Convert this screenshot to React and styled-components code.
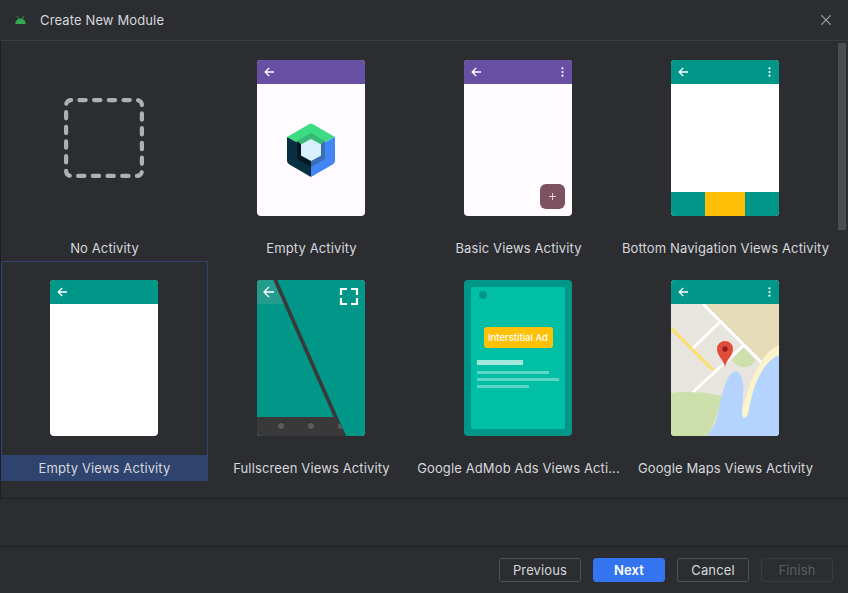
import React from "react";
import styled, { createGlobalStyle } from "styled-components";

const GlobalStyle = createGlobalStyle`
  html, body {
    margin: 0;
    padding: 0;
    background: #2b2d30;
  }
  * {
    box-sizing: border-box;
  }
`;

const Dialog = styled.div`
  width: 848px;
  height: 593px;
  display: flex;
  flex-direction: column;
  background: #2b2d30;
  color: #d6d8dd;
  font-family: Inter, "Liberation Sans", sans-serif;
  font-size: 13px;
  letter-spacing: 0.13px;
  overflow: hidden;
`;

const TitleBar = styled.header`
  height: 41px;
  flex: none;
  display: flex;
  align-items: center;
  padding: 0 17px 1px 15px;
  border-bottom: 1px solid #393b40;
`;

const Title = styled.span`
  margin-left: 14px;
  flex: 1;
`;

const Gallery = styled.div`
  position: relative;
  height: 458px;
  flex: none;
  border-left: 1px solid #1e1f22;
  border-bottom: 1px solid #1e1f22;
`;

const Grid = styled.div`
  display: grid;
  grid-template-columns: repeat(4, 207px);
  grid-auto-rows: 220px;
`;

const Cell = styled.div`
  display: flex;
  flex-direction: column;
  align-items: center;
  padding-top: 19px;
  box-shadow: ${(props) => (props.selected ? "inset 0 0 0 1px #2e436e" : "none")};
`;

const Label = styled.div`
  width: 100%;
  height: 26px;
  margin-top: 19px;
  display: flex;
  align-items: center;
  justify-content: center;
  white-space: nowrap;
  background: ${(props) => (props.selected ? "#2e436e" : "transparent")};
`;

const Scrollbar = styled.div`
  position: absolute;
  top: 2px;
  right: 2px;
  width: 8px;
  height: 187px;
  background: #4c4d51;
`;

const Thumb = styled.div`
  position: relative;
  width: 108px;
  height: 156px;
  margin-right: 2px;
  flex: none;
  display: flex;
  flex-direction: column;
  border-radius: 4px;
  overflow: hidden;
  background: ${(props) => props.bg || "#fff"};
`;

const EmptyThumb = styled.div`
  width: 108px;
  height: 156px;
  margin-right: 2px;
  flex: none;
  display: flex;
  align-items: center;
  justify-content: center;
`;

const AppBar = styled.div`
  height: 24px;
  flex: none;
  display: flex;
  align-items: center;
  justify-content: space-between;
  padding: 0 8px 0 7px;
  background: ${(props) => props.color};
`;

const Body = styled.div`
  flex: 1;
  display: flex;
  align-items: center;
  justify-content: center;
`;

const Fab = styled.div`
  position: absolute;
  right: 7px;
  bottom: 7px;
  width: 25px;
  height: 25px;
  display: flex;
  align-items: center;
  justify-content: center;
  border-radius: 6px;
  background: #7d5260;
`;

const BottomNav = styled.div`
  height: 24px;
  flex: none;
  display: grid;
  grid-template-columns: 34px 40px 34px;
  background: #009688;
`;

const NavActive = styled.div`
  grid-column: 2;
  background: #ffc107;
`;

const AdFrame = styled.div`
  flex: 1;
  margin: 7px;
  display: flex;
  flex-direction: column;
  padding: 4px 6px 0 6px;
  border-radius: 1px;
  background: #00bfa5;
`;

const AdDot = styled.div`
  width: 8px;
  height: 8px;
  margin-left: 2px;
  border-radius: 50%;
  background: #009688;
`;

const AdBadge = styled.div`
  width: 69px;
  height: 21px;
  margin: 28px 0 12px 7px;
  display: flex;
  align-items: center;
  justify-content: center;
  border-radius: 3px;
  background: #ffc107;
  color: #fff;
  font-size: 9.5px;
  font-weight: 500;
  letter-spacing: 0;
  white-space: nowrap;
`;

const AdLine = styled.div`
  height: ${(props) => (props.heading ? 5 : 3)}px;
  width: ${(props) => props.w}px;
  margin-bottom: ${(props) => (props.heading ? 6 : 4)}px;
  background: ${(props) => (props.heading ? "#a3e8dc" : "#5fd6c3")};
`;

const Footer = styled.footer`
  margin-top: 47px;
  flex: 1;
  display: flex;
  justify-content: flex-end;
  gap: 12px;
  padding: 11px 15px 0 0;
  border-top: 1px solid #1e1f22;
`;

const Button = styled.button`
  width: ${(props) => props.w || 72}px;
  height: 24px;
  padding: 0;
  border-radius: 3px;
  border: 1px solid ${(props) => (props.primary ? "#3574f0" : props.disabled ? "#393b40" : "#4e5157")};
  background: ${(props) => (props.primary ? "#3574f0" : "transparent")};
  color: ${(props) => (props.primary ? "#fff" : props.disabled ? "#5a5d63" : "#d6d8dd")};
  font-family: inherit;
  font-size: 13px;
  letter-spacing: inherit;
  font-weight: ${(props) => (props.primary ? 600 : 400)};
`;

const Back = () => (
  <svg width="10" height="10" viewBox="0 0 10 10" fill="none" stroke="#fff" strokeWidth="1.3">
    <path d="M10 5H1.2M5.2 1L1.2 5l4 4" />
  </svg>
);

const Dots = () => (
  <svg width="3" height="10" viewBox="0 0 3 10" fill="#fff">
    <circle cx="1.5" cy="1.3" r="1.1" />
    <circle cx="1.5" cy="5" r="1.1" />
    <circle cx="1.5" cy="8.7" r="1.1" />
  </svg>
);

const AndroidIcon = () => (
  <svg width="11" height="8" viewBox="0 0 11 8" fill="#34a853">
    <path d="M0.3 8C0.5 5 2.5 2.6 5.5 2.6S10.500 5 10.700 8Z" />
    <path d="M2 0l1.800 3M9 0L7.200 3" stroke="#34a853" strokeWidth="0.8" />
  </svg>
);

const CloseIcon = () => (
  <svg width="10" height="10" viewBox="0 0 10 10" stroke="#a4a7ae" strokeWidth="1.1">
    <path d="M0.300 0.300l9.400 9.400M9.700 0.300l-9.400 9.400" />
  </svg>
);

const DashedSquare = () => (
  <svg width="80" height="80" viewBox="0 0 80 80" fill="none">
    <rect
      x="2.100"
      y="2.100"
      width="75.800"
      height="75.800"
      rx="5"
      stroke="#aeb0b3"
      strokeWidth="4.200"
      strokeLinecap="round"
      strokeDasharray="6.300 8.400"
      strokeDashoffset="-8.300"
    />
  </svg>
);

const ComposeLogo = () => (
  <svg width="48" height="54" viewBox="0 0 48 54">
    <path d="M22 1.200a4 4 0 0 1 4 0L48 14 24 27 0 14Z" fill="#3ddc84" />
    <path d="M0 14l24 13v27l-22-12.800a4 4 0 0 1-2-3.200Z" fill="#073042" />
    <path d="M48 14L24 27v27l22-12.800a4 4 0 0 0 2-3.200Z" fill="#4285f4" />
    <path d="M10 18l14-8 14 8-4 3-10-5-10 5Z" fill="#37b877" />
    <path d="M10 18l4 3v12l10 5v6l-14-8Z" fill="#041a20" />
    <path d="M38 18l-4 3v12l-10 5v6l14-8Z" fill="#3b6fb5" />
    <path d="M24 16l10 5.500v11L24 38l-10-5.500v-11Z" fill="#d7effe" />
  </svg>
);

const FullscreenArt = () => (
  <svg width="108" height="156" viewBox="0 0 108 156">
    <defs>
      <clipPath id="navbar">
        <path d="M0 137h80.600L89 156H0Z" />
      </clipPath>
    </defs>
    <rect width="108" height="156" fill="#009688" />
    <path d="M0 0h19l10 24H0Z" fill="#239b8d" />
    <path d="M16.300 0h4L89 156h-4Z" fill="#393939" />
    <path d="M0 137h80.600L89 156H0Z" fill="#393939" />
    <g clipPath="url(#navbar)" fill="#5a5a5a">
      <circle cx="24" cy="146" r="3" />
      <circle cx="54" cy="146" r="3" />
      <circle cx="84" cy="146" r="3" />
    </g>
    <path d="M7 12H17M12 7L7 12l5 5" fill="none" stroke="#fff" strokeWidth="1.300" />
    <path
      d="M84 15V9h6M94 9h6v6M100 18v6h-6M90 24h-6v-6"
      fill="none"
      stroke="#fff"
      strokeWidth="2.200"
    />
  </svg>
);

const MapArt = () => (
  <svg width="108" height="132" viewBox="0 0 108 132">
    <rect width="108" height="132" fill="#e8e4de" />
    <path d="M32 0H108V41L90 58Z" fill="#e6dcb9" />
    <path d="M61 56L72 43 84 56C82 63 70 68 61 56Z" fill="#cde0ab" />
    <path d="M0 89C18 86 36 89 51 92C47 108 43 122 36 132H0Z" fill="#cde0ab" />
    <path d="M0 24L42 66" stroke="#ffe066" strokeWidth="3" />
    <path d="M32 0L90 58M22 88L72 42M22 44L49 18" stroke="#fff" strokeWidth="3" />
    <path d="M108 41C92 48 80 72 71 107C69 118 76 120 78 106C80 86 92 62 108 51Z" fill="#fbf3c9" />
    <path d="M108 51C92 58 82 80 78 106C76 116 71 116 71 108C71 96 74 84 71 74C67 64 62 66 57 74C52 84 50 96 46 113C44 120 41 126 36 132H108Z" fill="#b5d3ff" />
    <path d="M54 63C53 56 46 52 46 45a8 8 0 0 1 16 0C62 52 55 56 54 63Z" fill="#e04b3a" />
    <circle cx="54" cy="45" r="2.700" fill="#8c2018" />
  </svg>
);

const Plus = () => (
  <svg width="7" height="7" viewBox="0 0 7 7" stroke="#f1d9e0" strokeWidth="0.900">
    <path d="M3.500 0v7M0 3.500h7" />
  </svg>
);

const App = () => (
  <Dialog>
    <GlobalStyle />
    <TitleBar>
      <AndroidIcon />
      <Title>Create New Module</Title>
      <CloseIcon />
    </TitleBar>
    <Gallery>
      <Grid>
        <Cell>
          <EmptyThumb>
            <DashedSquare />
          </EmptyThumb>
          <Label>No Activity</Label>
        </Cell>
        <Cell>
          <Thumb bg="#fffbfe">
            <AppBar color="#6750a4">
              <Back />
            </AppBar>
            <Body>
              <ComposeLogo />
            </Body>
          </Thumb>
          <Label>Empty Activity</Label>
        </Cell>
        <Cell>
          <Thumb bg="#fffbfe">
            <AppBar color="#6750a4">
              <Back />
              <Dots />
            </AppBar>
            <Fab>
              <Plus />
            </Fab>
          </Thumb>
          <Label>Basic Views Activity</Label>
        </Cell>
        <Cell>
          <Thumb>
            <AppBar color="#009688">
              <Back />
              <Dots />
            </AppBar>
            <Body />
            <BottomNav>
              <NavActive />
            </BottomNav>
          </Thumb>
          <Label>Bottom Navigation Views Activity</Label>
        </Cell>
        <Cell selected>
          <Thumb>
            <AppBar color="#009688">
              <Back />
            </AppBar>
          </Thumb>
          <Label selected>Empty Views Activity</Label>
        </Cell>
        <Cell>
          <Thumb>
            <FullscreenArt />
          </Thumb>
          <Label>Fullscreen Views Activity</Label>
        </Cell>
        <Cell>
          <Thumb bg="#009688">
            <AdFrame>
              <AdDot />
              <AdBadge>Interstitial Ad</AdBadge>
              <AdLine heading w={46} />
              <AdLine w={72} />
              <AdLine w={82} />
              <AdLine w={52} />
            </AdFrame>
          </Thumb>
          <Label>Google AdMob Ads Views Acti...</Label>
        </Cell>
        <Cell>
          <Thumb>
            <AppBar color="#009688">
              <Back />
              <Dots />
            </AppBar>
            <MapArt />
          </Thumb>
          <Label>Google Maps Views Activity</Label>
        </Cell>
      </Grid>
      <Scrollbar />
    </Gallery>
    <Footer>
      <Button w={82}>Previous</Button>
      <Button primary>Next</Button>
      <Button>Cancel</Button>
      <Button disabled>Finish</Button>
    </Footer>
  </Dialog>
);

export default App;
